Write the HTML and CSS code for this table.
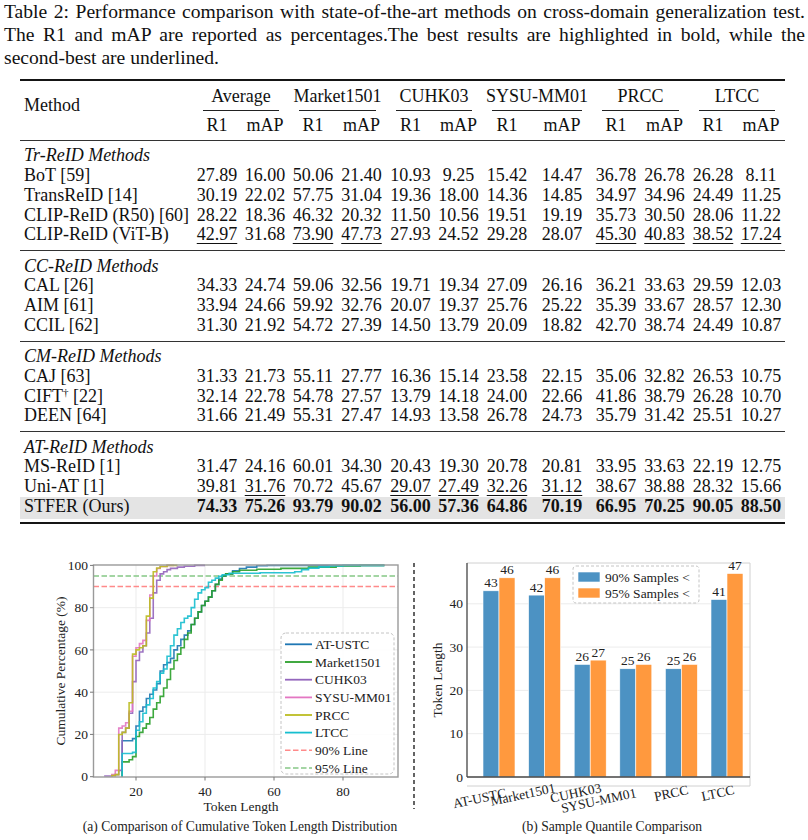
FILE: index.html
```html
<!DOCTYPE html>
<html>
<head>
<meta charset="utf-8">
<link rel="stylesheet" href="styles.css">
</head>
<body>
<div class="page">
  <div class="caption">
    <div class="cl just">Table 2: Performance comparison with state-of-the-art methods on cross-domain generalization test.</div>
    <div class="cl just">The R1 and mAP are reported as percentages.The best results are highlighted in bold, while the</div>
    <div class="cl">second-best are underlined.</div>
  </div>

  <div class="tbl">
    <div class="thead">
      <div class="method">Method</div>
      <div class="grp"><span>Average</span></div>
      <div class="grp"><span>Market1501</span></div>
      <div class="grp"><span>CUHK03</span></div>
      <div class="grp"><span>SYSU-MM01</span></div>
      <div class="grp"><span>PRCC</span></div>
      <div class="grp"><span>LTCC</span></div>
      <div class="sub">R1</div><div class="sub">mAP</div>
      <div class="sub">R1</div><div class="sub">mAP</div>
      <div class="sub">R1</div><div class="sub">mAP</div>
      <div class="sub">R1</div><div class="sub">mAP</div>
      <div class="sub">R1</div><div class="sub">mAP</div>
      <div class="sub">R1</div><div class="sub">mAP</div>
    </div>

    <div class="sec">
      <div class="row head"><span class="m"><i>Tr-ReID Methods</i></span></div>
      <div class="row"><span class="m">BoT [59]</span><span>27.89</span><span>16.00</span><span>50.06</span><span>21.40</span><span>10.93</span><span>9.25</span><span>15.42</span><span>14.47</span><span>36.78</span><span>26.78</span><span>26.28</span><span>8.11</span></div>
      <div class="row"><span class="m">TransReID [14]</span><span>30.19</span><span>22.02</span><span>57.75</span><span>31.04</span><span>19.36</span><span>18.00</span><span>14.36</span><span>14.85</span><span>34.97</span><span>34.96</span><span>24.49</span><span>11.25</span></div>
      <div class="row"><span class="m">CLIP-ReID (R50) [60]</span><span>28.22</span><span>18.36</span><span>46.32</span><span>20.32</span><span>11.50</span><span>10.56</span><span>19.51</span><span>19.19</span><span>35.73</span><span>30.50</span><span>28.06</span><span>11.22</span></div>
      <div class="row"><span class="m">CLIP-ReID (ViT-B)</span><span><u>42.97</u></span><span>31.68</span><span><u>73.90</u></span><span><u>47.73</u></span><span>27.93</span><span>24.52</span><span>29.28</span><span>28.07</span><span><u>45.30</u></span><span><u>40.83</u></span><span><u>38.52</u></span><span><u>17.24</u></span></div>
    </div>

    <div class="sec">
      <div class="row head"><span class="m"><i>CC-ReID Methods</i></span></div>
      <div class="row"><span class="m">CAL [26]</span><span>34.33</span><span>24.74</span><span>59.06</span><span>32.56</span><span>19.71</span><span>19.34</span><span>27.09</span><span>26.16</span><span>36.21</span><span>33.63</span><span>29.59</span><span>12.03</span></div>
      <div class="row"><span class="m">AIM [61]</span><span>33.94</span><span>24.66</span><span>59.92</span><span>32.76</span><span>20.07</span><span>19.37</span><span>25.76</span><span>25.22</span><span>35.39</span><span>33.67</span><span>28.57</span><span>12.30</span></div>
      <div class="row"><span class="m">CCIL [62]</span><span>31.30</span><span>21.92</span><span>54.72</span><span>27.39</span><span>14.50</span><span>13.79</span><span>20.09</span><span>18.82</span><span>42.70</span><span>38.74</span><span>24.49</span><span>10.87</span></div>
    </div>

    <div class="sec">
      <div class="row head"><span class="m"><i>CM-ReID Methods</i></span></div>
      <div class="row"><span class="m">CAJ [63]</span><span>31.33</span><span>21.73</span><span>55.11</span><span>27.77</span><span>16.36</span><span>15.14</span><span>23.58</span><span>22.15</span><span>35.06</span><span>32.82</span><span>26.53</span><span>10.75</span></div>
      <div class="row"><span class="m">CIFT<sup>†</sup> [22]</span><span>32.14</span><span>22.78</span><span>54.78</span><span>27.57</span><span>13.79</span><span>14.18</span><span>24.00</span><span>22.66</span><span>41.86</span><span>38.79</span><span>26.28</span><span>10.70</span></div>
      <div class="row"><span class="m">DEEN [64]</span><span>31.66</span><span>21.49</span><span>55.31</span><span>27.47</span><span>14.93</span><span>13.58</span><span>26.78</span><span>24.73</span><span>35.79</span><span>31.42</span><span>25.51</span><span>10.27</span></div>
    </div>

    <div class="sec last">
      <div class="row head"><span class="m"><i>AT-ReID Methods</i></span></div>
      <div class="row"><span class="m">MS-ReID [1]</span><span>31.47</span><span>24.16</span><span>60.01</span><span>34.30</span><span>20.43</span><span>19.30</span><span>20.78</span><span>20.81</span><span>33.95</span><span>33.63</span><span>22.19</span><span>12.75</span></div>
      <div class="row"><span class="m">Uni-AT [1]</span><span>39.81</span><span><u>31.76</u></span><span>70.72</span><span>45.67</span><span><u>29.07</u></span><span><u>27.49</u></span><span><u>32.26</u></span><span><u>31.12</u></span><span>38.67</span><span>38.88</span><span>28.32</span><span>15.66</span></div>
      <div class="row best"><span class="m">STFER (Ours)</span><b>74.33</b><b>75.26</b><b>93.79</b><b>90.02</b><b>56.00</b><b>57.36</b><b>64.86</b><b>70.19</b><b>66.95</b><b>70.25</b><b>90.05</b><b>88.50</b></div>
    </div>
  </div>

  <div class="figs">
    <figure class="fig fig-a">
      <svg class="chart" width="416" height="276" viewBox="0 540 416 276">
        <defs>
          <clipPath id="clipA"><rect x="93.5" y="564" width="304.5" height="213"/></clipPath>
        </defs>
        <g class="grid">
          <line x1="136" y1="565" x2="136" y2="777"/>
          <line x1="205" y1="565" x2="205" y2="777"/>
          <line x1="274" y1="565" x2="274" y2="777"/>
          <line x1="343" y1="565" x2="343" y2="777"/>
          <line x1="93.5" y1="734.4" x2="398" y2="734.4"/>
          <line x1="93.5" y1="692.2" x2="398" y2="692.2"/>
          <line x1="93.5" y1="649.9" x2="398" y2="649.9"/>
          <line x1="93.5" y1="607.7" x2="398" y2="607.7"/>
        </g>
        <g clip-path="url(#clipA)">
          <line class="ref90" x1="93.5" y1="586.5" x2="398" y2="586.5"/>
          <line class="ref95" x1="93.5" y1="576" x2="398" y2="576"/>
          <g transform="matrix(3.45 0 0 -2.113 67 776.7)">
            <path class="curve c-blue" d="M16 0 V17 H19 V18 H20 V24 H21 V31 H22 V33 H23 V37 H24 V39 H25 V41 H26 V44 H27 V50 H28 V53 H29 V54 H30 V56 H31 V60 H32 V62 H33 V65 H34 V67 H35 V69 H36 V72 H37 V75 H38 V78 H39 V81 H40 V83 H41 V85 H42 V88 H43 V91 H44 V93.5 H45 V95 H46 V96 H48 V97.5 H50 V98.5 H52 V99.2 H55 V99.8 H58 V100 H92"/>
            <path class="curve c-green" d="M16 0 V7 H18 V8 H19 V9.5 H20 V19 H21 V21 H22 V23 H23 V25 H24 V28 H25 V32 H26 V35 H27 V38 H28 V42 H29 V46 H30 V51 H31 V55 H32 V58 H33 V61 H34 V65 H35 V68 H36 V72 H37 V75 H38 V78 H39 V81 H40 V83 H41 V85 H42 V88 H43 V91 H44 V93 H45 V95 H46 V96 H48 V97 H50 V97.7 H55 V98.2 H62 V98.6 H70 V99.2 H78 V99.7 H85 V100 H92"/>
            <path class="curve c-purple" d="M11 0 V0.3 H13 V0.6 H14 V1 H15 V3 H16 V21 H17 V23 H18 V30 H19 V45 H20 V55 H21 V59 H22 V62 H23 V68 H24 V75 H25 V87 H26 V93 H27 V96 H28 V97 H29 V98 H30 V98.6 H32 V99.2 H34 V99.6 H37 V100 H40"/>
            <path class="curve c-pink" d="M13 0 V1 H14 V3 H15 V23 H16 V24 H17 V25.5 H18 V31 H19 V57 H20 V61 H21 V63 H22 V64.5 H23 V74 H24 V86 H25 V95 H26 V98.5 H27 V99.5 H29 V100 H31"/>
            <path class="curve c-olive" d="M13 0 V0.5 H14 V1 H15 V20 H16 V21 H17 V23 H18 V35 H19 V58 H20 V60 H21 V61 H22 V62 H23 V76 H24 V84.5 H25 V97 H26 V98.8 H27 V99.5 H29 V100 H32"/>
            <path class="curve c-cyan" d="M16 0 V11 H19 V11.5 H20 V22 H21 V26 H22 V30 H23 V34 H24 V37 H25 V42 H26 V45 H27 V49 H28 V51 H29 V57 H30 V62 H31 V67 H32 V70 H33 V73 H34 V75 H35 V76 H36 V80 H37 V84 H38 V87 H39 V88.5 H40 V89.5 H41 V92 H42 V93 H43 V94 H44 V94.8 H45 V95.6 H47 V96.3 H56 V96.5 H66 V97 H68 V98 H70 V98.7 H73 V99.3 H76 V99.7 H80 V100 H92"/>
          </g>
        </g>
        <rect class="frame" x="93.5" y="565" width="304.5" height="212"/>
        <g class="ticks">
          <line x1="90" y1="565.4" x2="93.5" y2="565.4"/>
          <line x1="90" y1="607.7" x2="93.5" y2="607.7"/>
          <line x1="90" y1="649.9" x2="93.5" y2="649.9"/>
          <line x1="90" y1="692.2" x2="93.5" y2="692.2"/>
          <line x1="90" y1="734.4" x2="93.5" y2="734.4"/>
          <line x1="90" y1="776.7" x2="93.5" y2="776.7"/>
          <line x1="136" y1="777" x2="136" y2="780.5"/>
          <line x1="205" y1="777" x2="205" y2="780.5"/>
          <line x1="274" y1="777" x2="274" y2="780.5"/>
          <line x1="343" y1="777" x2="343" y2="780.5"/>
        </g>
        <g class="ylab">
          <text x="88" y="570.1">100</text>
          <text x="88" y="612.4">80</text>
          <text x="88" y="654.6">60</text>
          <text x="88" y="696.9">40</text>
          <text x="88" y="739.1">20</text>
          <text x="88" y="781.4">0</text>
        </g>
        <g class="xlab">
          <text x="136" y="796">20</text>
          <text x="205" y="796">40</text>
          <text x="274" y="796">60</text>
          <text x="343" y="796">80</text>
          <text x="241" y="810.5">Token Length</text>
        </g>
        <text class="axtitle" transform="translate(65 671) rotate(-90)">Cumulative Percentage (%)</text>

        <g class="legend">
          <rect class="legbox" x="281" y="633" width="113" height="141" rx="5"/>
          <line class="lh c-blue" x1="285" y1="644.3" x2="312" y2="644.3"/>
          <line class="lh c-green" x1="285" y1="662" x2="312" y2="662"/>
          <line class="lh c-purple" x1="285" y1="679.7" x2="312" y2="679.7"/>
          <line class="lh c-pink" x1="285" y1="697.4" x2="312" y2="697.4"/>
          <line class="lh c-olive" x1="285" y1="715" x2="312" y2="715"/>
          <line class="lh c-cyan" x1="285" y1="732.6" x2="312" y2="732.6"/>
          <line class="ref90" x1="285" y1="750.3" x2="312" y2="750.3"/>
          <line class="ref95" x1="285" y1="768" x2="312" y2="768"/>
          <text x="315" y="648.9">AT-USTC</text>
          <text x="315" y="666.6">Market1501</text>
          <text x="315" y="684.3">CUHK03</text>
          <text x="315" y="702">SYSU-MM01</text>
          <text x="315" y="719.6">PRCC</text>
          <text x="315" y="737.2">LTCC</text>
          <text x="315" y="754.9">90% Line</text>
          <text x="315" y="772.6">95% Line</text>
        </g>
        <line class="sep" x1="414" y1="563" x2="414" y2="809"/>
      </svg>
      <figcaption class="fcap fcap-a">(a) Comparison of Cumulative Token Length Distribution</figcaption>
    </figure>

    <figure class="fig fig-b">
      <svg class="chart" width="392" height="276" viewBox="416 540 392 276">
        <g class="grid">
          <line x1="467" y1="733.7" x2="750" y2="733.7"/>
          <line x1="467" y1="690.4" x2="750" y2="690.4"/>
          <line x1="467" y1="647.1" x2="750" y2="647.1"/>
          <line x1="467" y1="603.8" x2="750" y2="603.8"/>
        </g>
        <line class="spine-light" x1="467" y1="563" x2="750" y2="563"/>
        <line class="spine-light" x1="750" y1="563" x2="750" y2="786"/>
        <line class="spine-light" x1="467" y1="786" x2="750" y2="786"/>
        <g class="bars">
          <rect class="b90" x="483" y="590.8" width="16" height="186.2"/>
          <rect class="b95" x="499" y="577.8" width="16" height="199.2"/>
          <rect class="b90" x="528.6" y="595.1" width="16" height="181.9"/>
          <rect class="b95" x="544.6" y="577.8" width="16" height="199.2"/>
          <rect class="b90" x="574.2" y="664.4" width="16" height="112.6"/>
          <rect class="b95" x="590.2" y="660.1" width="16" height="116.9"/>
          <rect class="b90" x="619.8" y="668.75" width="16" height="108.25"/>
          <rect class="b95" x="635.8" y="664.4" width="16" height="112.6"/>
          <rect class="b90" x="665.4" y="668.75" width="16" height="108.25"/>
          <rect class="b95" x="681.4" y="664.4" width="16" height="112.6"/>
          <rect class="b90" x="711" y="599.5" width="16" height="177.5"/>
          <rect class="b95" x="727" y="573.5" width="16" height="203.5"/>
        </g>
        <g class="vals">
          <text x="491" y="587.3">43</text>
          <text x="507" y="574.3">46</text>
          <text x="536.6" y="591.6">42</text>
          <text x="552.6" y="574.3">46</text>
          <text x="582.2" y="660.9">26</text>
          <text x="598.2" y="656.6">27</text>
          <text x="627.8" y="665.2">25</text>
          <text x="643.8" y="660.9">26</text>
          <text x="673.4" y="665.2">25</text>
          <text x="689.4" y="660.9">26</text>
          <text x="719" y="596">41</text>
          <text x="735" y="570">47</text>
        </g>
        <line class="spine" x1="467" y1="563" x2="467" y2="777"/>
        <line class="spine" x1="467" y1="777" x2="750" y2="777"/>
        <g class="ylab">
          <text x="463" y="781.5">0</text>
          <text x="463" y="738.2">10</text>
          <text x="463" y="694.9">20</text>
          <text x="463" y="651.6">30</text>
          <text x="463" y="608.3">40</text>
        </g>
        <text class="axtitle" transform="translate(442 680) rotate(-90)">Token Length</text>
        <g class="rotlab">
          <text transform="translate(507 797) rotate(-12)">AT-USTC</text>
          <text transform="translate(556 792) rotate(-12)">Market1501</text>
          <text transform="translate(602 792) rotate(-12)">CUHK03</text>
          <text transform="translate(637 797) rotate(-12)">SYSU-MM01</text>
          <text transform="translate(689 794) rotate(-12)">PRCC</text>
          <text transform="translate(735 794) rotate(-12)">LTCC</text>
        </g>
        <g class="legend">
          <rect class="legbox" x="573" y="566" width="126" height="37" rx="3"/>
          <rect class="b90" x="578" y="572" width="22" height="10"/>
          <rect class="b95" x="578" y="588" width="22" height="10"/>
          <text x="605" y="581.7">90% Samples &lt;</text>
          <text x="605" y="597.7">95% Samples &lt;</text>
        </g>
      </svg>
      <figcaption class="fcap fcap-b">(b) Sample Quantile Comparison</figcaption>
    </figure>
  </div>
</div>
</body>
</html>
```

FILE: styles.css
```css
html, body {
  margin: 0;
  padding: 0;
  background: #ffffff;
}

body {
  width: 808px;
  height: 840px;
  overflow: hidden;
  font-family: "Liberation Serif", "Times New Roman", serif;
  color: #111;
}

.page {
  width: 808px;
}

/* ---------- caption ---------- */
.caption {
  padding: 0 3px 0 4px;
  font-size: 19.6px;
}

.cl {
  height: 23px;
  line-height: 23px;
  white-space: nowrap;
}

.cl.just {
  text-align: justify;
  text-align-last: justify;
  white-space: normal;
}

/* ---------- table ---------- */
.tbl {
  --cols: 173px 48px 48px 48px 49px 49px 47px 50px 60px 48px 49px 48px 48px;
  margin: 10px 0 0 20px;
  width: 765px;
  font-size: 18px;
}

.thead {
  display: grid;
  grid-template-columns: var(--cols);
  grid-template-rows: auto auto;
  border-top: 2px solid #151515;
}

.method {
  grid-row: 1 / span 2;
  grid-column: 1;
  padding: 14.8px 0 0 4px;
  line-height: 19.75px;
}

.grp {
  grid-column: span 2;
  padding-top: 5.8px;
}

.grp span {
  display: flex;
  justify-content: center;
  margin: 0 10px;
  padding-bottom: 3px;
  border-bottom: 1px solid #222;
  line-height: 19.75px;
  white-space: nowrap;
}

.sub {
  text-align: center;
  line-height: 19.75px;
  padding: 5.2px 0 4.5px;
}

.sec {
  border-top: 1px solid #333;
  padding: 5.5px 0 5px;
}

.sec.last {
  border-bottom: 2px solid #151515;
}

.row {
  display: grid;
  grid-template-columns: var(--cols);
  height: 19.75px;
  line-height: 19.75px;
  white-space: nowrap;
}

.row > span,
.row > b {
  text-align: center;
}

.row > .m {
  text-align: left;
  padding-left: 4px;
}

.row.head > .m {
  grid-column: 1 / -1;
}

.row u {
  text-decoration: underline;
  text-decoration-thickness: 1px;
  text-underline-offset: 2.5px;
}

.row sup {
  font-size: 11px;
  line-height: 0;
  vertical-align: 6px;
}

.row.best {
  background: #e4e4e4;
  box-shadow: 0 2px 0 #e4e4e4;
}

.row.best > b {
  font-weight: bold;
}

/* ---------- figures ---------- */
.figs {
  display: flex;
  margin-top: 16px;
}

.fig {
  margin: 0;
}

.chart {
  display: block;
  overflow: visible;
}

.chart text {
  font-family: "Liberation Serif", "Times New Roman", serif;
  font-size: 13.5px;
  fill: #222;
}

.fcap {
  font-size: 13.6px;
  line-height: 16px;
  padding-top: 3px;
  text-align: center;
  color: #222;
}

.fcap-a {
  padding-left: 64px;
}

.grid line {
  stroke: #ececec;
  stroke-width: 1;
}

.frame {
  fill: none;
  stroke: #9a9a9a;
  stroke-width: 1.4;
}

.ticks line {
  stroke: #777;
  stroke-width: 1;
}

.ylab text {
  text-anchor: end;
}

.xlab text {
  text-anchor: middle;
}

.chart .axtitle {
  text-anchor: middle;
}

.curve {
  fill: none;
  stroke-width: 1.6;
  vector-effect: non-scaling-stroke;
  stroke-linejoin: miter;
  opacity: 0.9;
}

.lh {
  stroke-width: 1.8;
}

.c-blue { stroke: #1f77b4; }
.c-green { stroke: #2ca02c; }
.c-purple { stroke: #9467bd; }
.c-pink { stroke: #e377c2; }
.c-olive { stroke: #bcbd22; }
.c-cyan { stroke: #17becf; }

.ref90 {
  stroke: #ff8a8a;
  stroke-width: 1.5;
  stroke-dasharray: 5.5 2.5;
}

.ref95 {
  stroke: #86c786;
  stroke-width: 1.5;
  stroke-dasharray: 5.5 2.5;
}

.legbox {
  fill: #ffffff;
  fill-opacity: 0.85;
  stroke: #c4c4c4;
  stroke-width: 1;
  stroke-dasharray: 3 2;
}

.sep {
  stroke: #111;
  stroke-width: 1.3;
  stroke-dasharray: 4 3;
}

.spine {
  stroke: #444;
  stroke-width: 1.3;
}

.spine-light {
  stroke: #d0d0d0;
  stroke-width: 1;
}

.b90 {
  fill: #4c92c3;
  stroke: #ffffff;
  stroke-width: 0.6;
}

.b95 {
  fill: #ff993e;
  stroke: #ffffff;
  stroke-width: 0.6;
}

.vals text {
  text-anchor: middle;
}

.rotlab text {
  text-anchor: end;
}
```
